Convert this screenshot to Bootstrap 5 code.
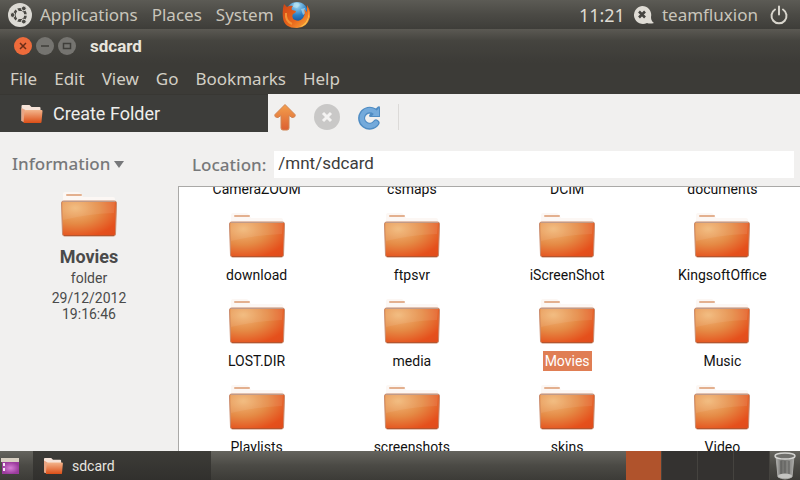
<!DOCTYPE html>
<html lang="en">
<head>
<meta charset="utf-8">
<meta name="viewport" content="width=device-width, initial-scale=1">
<title>sdcard</title>
<link href="https://cdn.jsdelivr.net/npm/bootstrap@5.3.0/dist/css/bootstrap.min.css" rel="stylesheet">
<style>
body { font-family: Roboto, sans-serif; font-size: 14px; line-height: 20px; background: #f1f0ef; color: #4a4a4a; }
button { border: 0; background: none; padding: 0; color: inherit; }
svg { display: block; flex-shrink: 0; }
.humanist { font-family: "Noto Sans", sans-serif; font-size: 17px; line-height: 24px; }
.panel { height: 29px; background: linear-gradient(#5c5b55, #4b4a45 50%, #3e3d39); color: #c9c5bb; }
.panel a, .menus a { color: inherit; text-decoration: none; }
.menus a { color: #d3cfc5; }
.top-links { gap: 14px; }
.clock { font-size: 18px; color: #dfdbd2; }
.titlebar { height: 34px; padding-left: 14px; gap: 14px; background: linear-gradient(#5b5953, #45443f 35%, #3c3b37); color: #e8e5dd; }
.titlebar h1 { font-size: 17px; line-height: 24px; }
.menus { height: 31px; gap: 17px; padding-left: 10px; background: #3c3b37; }
.tools { height: 38px; }
.create { width: 268px; padding-left: 20px; gap: 10px; background: #3d3d3a; border-top: 1px solid #383733; color: #eeeeec; font-size: 18px; line-height: 24px; }
.rule { width: 1px; height: 26px; background: #dcdad8; }
.side { width: 178px; }
.heading { color: #77787a; font-weight: 500; }
.details { font-size: 14px; line-height: 16px; }
.details h2 { font-size: 18px; line-height: 26px; }
.location-bar { padding: 19px 6px 8px 14px; gap: 8px; }
.address { height: 27px; padding: 0 4px 3px; border: 0; border-radius: 0; font-size: 17px; color: #3c3c3c; }
.listing { border: 1px solid #aaa9a7; border-bottom: 0; border-right: 0; background: #fff; }
.sheet { margin-top: -64px; }
.entry { height: 86px; padding-top: 4px; gap: 4px; color: #111; }
.caption { padding: 0 2px; }
.chosen .caption { background: #e07e54; color: #fff; }
.dock { background: linear-gradient(#65645e, #4b4a45 50%, #3c3b37); }
.launch { width: 33px; }
.task { width: 178px; padding-left: 10px; gap: 9px; background: linear-gradient(#3d3c38, #31302d); color: #e8e6e0; font-size: 14px; }
.desk { width: 36px; background: #343230; border-right: 1px solid #45433f; }
.desk.current { background: #b0532c; }
</style>
<script src="https://cdn.jsdelivr.net/npm/bootstrap@5.3.0/dist/js/bootstrap.bundle.min.js"></script>
</head>
<body class="vh-100 overflow-hidden d-flex flex-column">
<svg width="0" height="0" class="position-absolute" aria-hidden="true">
  <defs>
    <radialGradient id="front" cx=".25" cy=".2" r="1"><stop offset="0" stop-color="#f1b878"/><stop offset=".45" stop-color="#e58a45"/><stop offset=".85" stop-color="#e5501c"/><stop offset="1" stop-color="#e14d1c"/></radialGradient>
    <linearGradient id="arrow" x1="0" y1="0" x2="0" y2="1"><stop offset="0" stop-color="#f3a04d"/><stop offset="1" stop-color="#dc6032"/></linearGradient>
    <linearGradient id="tiny" x1="0" y1="0" x2="0" y2="1"><stop offset="0" stop-color="#f3b58c"/><stop offset="1" stop-color="#dc4e16"/></linearGradient>
    <radialGradient id="globe" cx=".5" cy=".15" r=".9"><stop offset="0" stop-color="#a9e0f5"/><stop offset=".5" stop-color="#2c7fc4"/><stop offset="1" stop-color="#143c80"/></radialGradient>
    <linearGradient id="fox" x1="0" y1="0" x2="1" y2="1"><stop offset="0" stop-color="#cf4516"/><stop offset=".55" stop-color="#e9651a"/><stop offset="1" stop-color="#fbb040"/></linearGradient>
    <radialGradient id="violet"><stop offset="0" stop-color="#d77fd6"/><stop offset="1" stop-color="#9b3b9d"/></radialGradient>
    <linearGradient id="glass" x1="0" x2="1" y1="0" y2="0"><stop offset="0" stop-color="#b5b5b2"/><stop offset=".3" stop-color="#70706d"/><stop offset=".7" stop-color="#858582"/><stop offset="1" stop-color="#aaaaa7"/></linearGradient>
  </defs>
  <symbol id="folder" viewBox="0 0 60 48">
    <path d="M4 12V2q0-2 2-2h13q2 0 3 2l2 3h30q2 0 2 2v6z" fill="#fcf7f4"/>
    <rect x="7" y="2" width="16" height="2" rx="1" fill="#e3b08f"/>
    <path d="M2.500 11q0-2 2-2h51q2 0 2 2l-1 31q0 2-2 2h-49q-2 0-2-2z" fill="url(#front)" stroke="#c98a6c"/>
    <path d="M4 10h52l-1 11Q28 22 4 28z" fill="#fff" opacity=".08"/>
    <path d="M4 9.500h52" stroke="#c09a88"/>
    <path d="M5 43.500h50" stroke="#b4552f"/>
  </symbol>
  <symbol id="mini" viewBox="0 0 22 20">
    <path d="M1 17V2q0-1 1-1h7l2 2h8q1 0 1 1v3L4 18z" fill="#f6e3d8"/>
    <path d="M1 4v13l4 1V6z" fill="#e9a584"/>
    <path d="M5 6h16q1 0 1 1l-1 11q0 1-1 1H3l1-12z" fill="url(#tiny)"/>
  </symbol>
</svg>

<header class="panel humanist d-flex align-items-center justify-content-between flex-shrink-0 px-2">
  <nav class="top-links d-flex align-items-center" aria-label="Desktop">
    <div class="d-flex align-items-center gap-2">
      <svg width="24" height="24" viewBox="0 0 24 24" aria-hidden="true"><circle cx="12" cy="12" r="12" fill="#dcdad4"/><circle cx="12" cy="12" r="5.500" fill="none" stroke="#4a4944" stroke-width="2.800"/><g stroke="#dcdad4" stroke-width="1.600"><path d="M12 12l-4-7M12 12l-4 7M12 12h8"/></g><circle cx="12" cy="12" r="4" fill="#dcdad4"/><g fill="#4a4944" stroke="#dcdad4"><circle cx="4.600" cy="12" r="2.400"/><circle cx="15.800" cy="5.400" r="2.400"/><circle cx="15.800" cy="18.600" r="2.400"/></g></svg>
      <a href="#">Applications</a>
    </div>
    <a href="#">Places</a>
    <div class="d-flex align-items-center gap-2">
      <a href="#">System</a>
      <svg width="28" height="28" viewBox="0 0 28 28" aria-hidden="true"><circle cx="15" cy="12" r="11" fill="url(#globe)"/><path d="M12 2q5-1 6 2l-3 3-4-1zM19 8l4-1 1 5-3 2z" fill="#bfe6f2" opacity=".6"/><path d="M2 3l3 3q3-2 6-1-2 2-1 4l4 1q0 2-3 3-2 4 2 6 5 2 8-2 3-4 1-9l3 3V4q4 6 3 12-3 11-13 11Q2 27 1 17 0 9 2 3z" fill="url(#fox)"/><path d="M25 6q5 14-8 20 9-1 10-11 0-5-2-9z" fill="#fcc14c"/><path d="M4 12q-1 8 6 11" stroke="#f49235" stroke-width="2" fill="none"/></svg>
    </div>
  </nav>
  <div class="d-flex align-items-center gap-2">
    <time class="clock">11:21</time>
    <svg width="21" height="20" viewBox="0 0 21 20" aria-hidden="true"><path d="M9 1a9 9 0 1 0 5 17q3 1 7 0-3-2-3-6A9 9 0 0 0 9 1z" fill="#dfdcd5"/><path d="M6 6.500l6 6M12 6.500l-6 6" stroke="#454440" stroke-width="2.600"/></svg>
    <a href="#">teamfluxion</a>
    <button type="button" class="ms-1 me-1" aria-label="Shut down"><svg width="18" height="20" viewBox="0 0 18 20" fill="none" stroke="#d8d5cd" stroke-width="2" stroke-linecap="round"><path d="M5 4.500a7.500 7.500 0 1 0 8 0M9 1.500v8"/></svg></button>
  </div>
</header>

<div class="titlebar d-flex align-items-center flex-shrink-0">
  <div class="d-flex gap-1">
    <button type="button" aria-label="Close"><svg width="18" height="18" viewBox="0 0 18 18"><circle cx="9" cy="9" r="9" fill="#ee6b3b"/><path d="M6 6l6 6M12 6l-6 6" stroke="#6b2d17" stroke-width="1.500"/></svg></button>
    <button type="button" aria-label="Minimise"><svg width="18" height="18" viewBox="0 0 18 18"><circle cx="9" cy="9" r="9" fill="#757470"/><path d="M5 9h8" stroke="#3f3e3a" stroke-width="1.500"/></svg></button>
    <button type="button" aria-label="Maximise"><svg width="18" height="18" viewBox="0 0 18 18"><circle cx="9" cy="9" r="9" fill="#757470"/><path d="M5.500 6.500h7v5h-7z" stroke="#3f3e3a" stroke-width="1.500" fill="none"/></svg></button>
  </div>
  <h1 class="fw-bold mb-0">sdcard</h1>
</div>

<nav class="menus humanist d-flex align-items-center flex-shrink-0" aria-label="Menu">
  <a href="#">File</a><a href="#">Edit</a><a href="#">View</a><a href="#">Go</a><a href="#">Bookmarks</a><a href="#">Help</a>
</nav>

<div class="tools d-flex flex-shrink-0">
  <button type="button" class="create d-flex align-items-center"><svg width="23" height="20" aria-hidden="true"><use href="#mini"/></svg>Create Folder</button>
  <div class="d-flex align-items-center gap-3 ps-1 pt-2">
    <button type="button" aria-label="Up"><svg width="26" height="28" viewBox="0 0 26 28"><path d="M13 1.500L23 11.500q1 3-3 3l-3-2V25q0 2-2 2h-4q-2 0-2-2V12.500l-3 2q-4 0-3-3z" fill="url(#arrow)" stroke="#d08453"/></svg></button>
    <button type="button" aria-label="Stop"><svg width="26" height="26" viewBox="0 0 26 26"><circle cx="13" cy="13" r="13" fill="#c9c8c7"/><path d="M9 9l8 8M17 9l-8 8" stroke="#f4f3f2" stroke-width="3"/></svg></button>
    <button type="button" aria-label="Reload"><svg width="26" height="26" viewBox="0 0 26 26"><path d="M18 7.500A8 8 0 1 0 20 19" fill="none" stroke="#4f8cc3" stroke-width="7" stroke-linecap="round"/><path d="M22 2.500q2-1 2 1V13H14q-2-1 0-3z" fill="#4f8cc3"/><path d="M19 8A8 8 0 1 0 20 19" fill="none" stroke="#74aadb" stroke-width="4.500" stroke-linecap="round"/><path d="M23 4v8h-7z" fill="#74aadb"/></svg></button>
    <div class="rule"></div>
  </div>
</div>

<div class="d-flex flex-grow-1 overflow-hidden">
  <aside class="side flex-shrink-0 pt-3">
    <div class="humanist pt-1 ps-2">
      <button type="button" class="heading d-flex align-items-center gap-1 ms-1">Information<svg width="10" height="7" viewBox="0 0 10 7" aria-hidden="true"><path d="M0 0h10L5 7z" fill="#77787a"/></svg></button>
    </div>
    <div class="details d-flex flex-column align-items-center text-center mt-3">
      <svg width="60" height="48" aria-hidden="true"><use href="#folder"/></svg>
      <h2 class="fw-bold mt-1 mb-0">Movies</h2>
      <div class="mb-1">folder</div>
      <div>29/12/2012</div>
      <div>19:16:46</div>
    </div>
  </aside>
  <main class="d-flex flex-column flex-grow-1 overflow-hidden">
    <div class="location-bar d-flex align-items-center">
      <label for="location" class="heading humanist">Location:</label>
      <input id="location" type="text" class="address flex-grow-1" value="/mnt/sdcard">
    </div>
    <div class="listing flex-grow-1 overflow-hidden">
      <div class="sheet row row-cols-4 g-0" id="sheet"></div>
    </div>
  </main>
</div>

<footer class="dock panel d-flex align-items-stretch flex-shrink-0">
  <button type="button" class="launch" aria-label="Show desktop"><svg width="20" height="22" viewBox="0 0 20 22"><path d="M1 3h18v4H1z" fill="#d8cfc2"/><path d="M2 7h17v12H2z" fill="url(#violet)"/><path d="M4 8v3M4 13v3" stroke="#f4e4f4" stroke-width="2"/></svg></button>
  <button type="button" class="task d-flex align-items-center"><svg width="20" height="18" aria-hidden="true"><use href="#mini"/></svg>sdcard</button>
  <div class="d-flex ms-auto">
    <div class="desk current"></div><div class="desk"></div><div class="desk"></div><div class="desk"></div>
  </div>
  <button type="button" class="px-1" aria-label="Trash"><svg width="22" height="28" viewBox="0 0 22 28"><path d="M2 4l2 21q7 4 14 0l2-21z" fill="url(#glass)" stroke="#a9a9a6"/><path d="M7 9v14M11 9v14M15 9v14" stroke="#5d5d5a"/><ellipse cx="11" cy="24" rx="7" ry="2.500" fill="#c4c4c1"/><ellipse cx="11" cy="4" rx="10" ry="3" fill="#70706c" stroke="#d4d4d1" stroke-width="1.500"/></svg></button>
</footer>

<script>
const names = ["CameraZOOM", "csmaps", "DCIM", "documents", "download", "ftpsvr", "iScreenShot", "KingsoftOffice",
  "LOST.DIR", "media", "Movies", "Music", "Playlists", "screenshots", "skins", "Video"];
document.getElementById("sheet").innerHTML = names.map(name =>
  `<button type="button" class="col entry d-flex flex-column align-items-center${name === "Movies" ? " chosen" : ""}">
     <svg width="60" height="48" aria-hidden="true"><use href="#folder"/></svg><span class="caption">${name}</span>
   </button>`).join("");
</script>
</body>
</html>
